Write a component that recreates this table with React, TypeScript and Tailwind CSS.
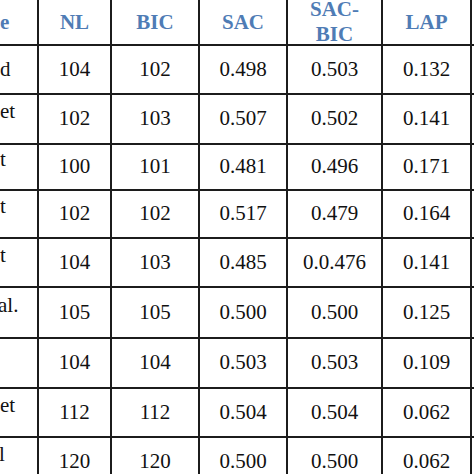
import React from "react"

interface Row {
  label: string
  twoLine: boolean
  shift?: string
  nl: string
  bic: string
  sac: string
  sacBic: string
  lap: string
}

const rows: Row[] = [
  { label: "d", twoLine: false, nl: "104", bic: "102", sac: "0.498", sacBic: "0.503", lap: "0.132" },
  { label: "et", twoLine: true, nl: "102", bic: "103", sac: "0.507", sacBic: "0.502", lap: "0.141" },
  { label: "t", twoLine: true, nl: "100", bic: "101", sac: "0.481", sacBic: "0.496", lap: "0.171" },
  { label: "t", twoLine: true, nl: "102", bic: "102", sac: "0.517", sacBic: "0.479", lap: "0.164" },
  { label: "t", twoLine: true, nl: "104", bic: "103", sac: "0.485", sacBic: "0.0.476", lap: "0.141" },
  { label: "al.", twoLine: true, shift: "-ml-[2px]", nl: "105", bic: "105", sac: "0.500", sacBic: "0.500", lap: "0.125" },
  { label: "", twoLine: false, nl: "104", bic: "104", sac: "0.503", sacBic: "0.503", lap: "0.109" },
  { label: "et", twoLine: true, nl: "112", bic: "112", sac: "0.504", sacBic: "0.504", lap: "0.062" },
  { label: "l", twoLine: true, shift: "-ml-[1px]", nl: "120", bic: "120", sac: "0.500", sacBic: "0.500", lap: "0.062" },
]

const cell = "flex items-center justify-center border-r-2 border-b-2 border-[#1c1c1c] overflow-hidden"
const head = `${cell} font-bold text-[#4f7cb5] text-center leading-[25px]`

export default function App() {
  return (
    <div
      className="w-[474px] h-[474px] overflow-hidden bg-white text-[#111] text-[21px]"
      style={{ fontFamily: '"Liberation Serif", "Times New Roman", serif' }}
    >
      <div className="grid grid-cols-[39px_73px_88px_88px_95px_89px_40px] grid-rows-[46px_49px_50px_46px_48px_49px_51px_50px_49px_50px]">
        {/* cabeçalho */}
        <div className={`${head} !justify-start`}>e</div>
        <div className={head}>NL</div>
        <div className={head}>BIC</div>
        <div className={head}>SAC</div>
        <div className={`${head} flex-col`}>
          <span>SAC-</span>
          <span>BIC</span>
        </div>
        <div className={head}>LAP</div>
        <div className={head}></div>

        {rows.map((r, i) => (
          <React.Fragment key={i}>
            <div className={`${cell} !justify-start`}>
              <div className={`flex flex-col leading-[15px] whitespace-nowrap ${r.shift ?? ""}`}>
                <span>{r.label || "\u00a0"}</span>
                {r.twoLine && <span>{"\u00a0"}</span>}
              </div>
            </div>
            <div className={cell}>{r.nl}</div>
            <div className={cell}>{r.bic}</div>
            <div className={cell}>{r.sac}</div>
            <div className={cell}>{r.sacBic}</div>
            <div className={cell}>{r.lap}</div>
            <div className={cell}></div>
          </React.Fragment>
        ))}
      </div>
    </div>
  )
}
